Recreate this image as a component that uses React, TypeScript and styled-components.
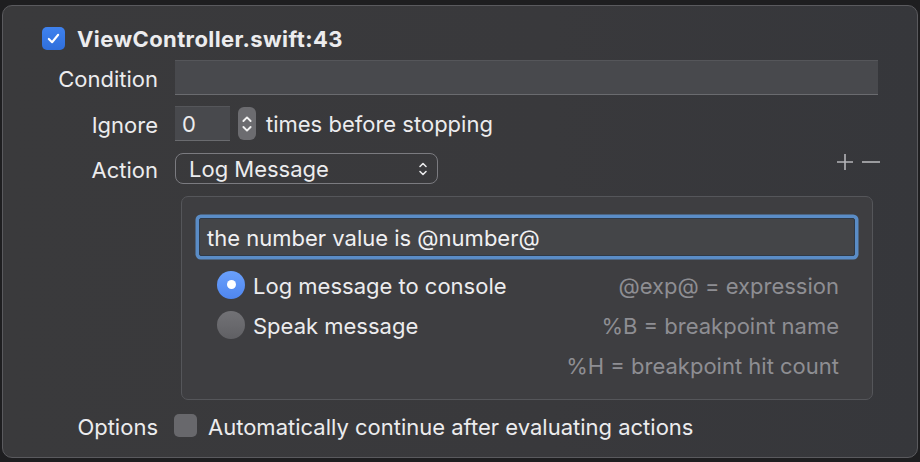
import * as React from "react";
import styled, { createGlobalStyle } from "styled-components";

const GlobalStyle = createGlobalStyle`
  html, body {
    margin: 0;
    padding: 0;
    background: #1d1d1f;
  }
  body {
    font-family: Inter, "Noto Sans", "Liberation Sans", sans-serif;
    -webkit-font-smoothing: antialiased;
  }
`;

const Page = styled.div`
  width: 920px;
  height: 462px;
  box-sizing: border-box;
  padding: 5px 2px 4px 2px;
  background: #1e1e20;
  overflow: hidden;
`;

const Popover = styled.div`
  height: 100%;
  box-sizing: border-box;
  border: 1px solid #5a5a5e;
  border-radius: 10px;
  background: linear-gradient(90deg, #3a3a3c 0%, #39393c 60%, #36373b 100%);
  padding: 21px 39px 0 0;
  display: flex;
  flex-direction: column;
  color: #ececee;
  font-size: 22px;
  line-height: 1.2;
`;

const Header = styled.div`
  display: flex;
  align-items: center;
  gap: 12px;
  padding-left: 39px;
  height: 23px;
`;

const Title = styled.div`
  font-weight: 700;
  font-size: 22px;
  letter-spacing: 0.4px;
  padding-top: 1px;
`;

const Row = styled.div<{ $top: number; $height: number }>`
  display: grid;
  grid-template-columns: 155px 1fr;
  column-gap: 17px;
  align-items: center;
  margin-top: ${(p) => p.$top}px;
  height: ${(p) => p.$height}px;
`;

const Label = styled.div`
  text-align: right;
  padding-top: 3px;
`;

const Field = styled.div`
  height: 100%;
  box-sizing: border-box;
  background: #48494d;
  border-top: 1px solid #55565a;
  border-bottom: 1px solid #6a6b6f;
`;

const Inline = styled.div`
  display: flex;
  align-items: center;
  gap: 8px;
  height: 100%;
`;

const NumberField = styled.div`
  width: 55px;
  height: 100%;
  box-sizing: border-box;
  background: #48494d;
  border-top: 1px solid #55565a;
  border-bottom: 1px solid #6a6b6f;
  padding: 2px 0 0 7px;
  display: flex;
  align-items: center;
`;

const Stepper = styled.div`
  width: 18px;
  height: 33px;
  border-radius: 6px;
  background: #6c6c70;
  display: flex;
  align-items: center;
  justify-content: center;
  margin-right: 2px;
`;

const ActionLine = styled.div`
  display: flex;
  align-items: center;
  justify-content: space-between;
  height: 100%;
`;

const Popup = styled.div`
  width: 263px;
  height: 31px;
  box-sizing: border-box;
  border: 1.5px solid #7b7b80;
  border-radius: 8px;
  display: flex;
  align-items: center;
  justify-content: space-between;
  padding: 1px 9px 0 13px;
`;

const PlusMinus = styled.div`
  display: flex;
  align-items: center;
  gap: 8px;
  margin-right: -2px;
  margin-top: -14px;
`;

const ActionBox = styled.div`
  margin: 12px 5px 0 178px;
  height: 204px;
  box-sizing: border-box;
  border: 1px solid #55565a;
  border-radius: 7px;
  background: #3e3e41;
  padding: 21px 17px 0 17px;
  display: flex;
  flex-direction: column;
`;

const MessageField = styled.div`
  height: 38px;
  box-sizing: border-box;
  background: #444548;
  border: 1px solid #2f3a48;
  box-shadow: 0 0 0 3.5px #5a8cc6;
  border-radius: 2px;
  padding: 2px 0 0 7px;
  display: flex;
  align-items: center;
  color: #f0f0f2;
`;

const Options = styled.div`
  display: grid;
  grid-template-columns: 1fr auto;
  grid-auto-rows: 40px;
  margin-top: 9px;
  padding: 0 16px 0 18px;
  align-items: center;
`;

const RadioItem = styled.div`
  display: flex;
  align-items: center;
  gap: 8px;
`;

const Radio = styled.div<{ $on?: boolean }>`
  width: 28px;
  height: 28px;
  border-radius: 50%;
  box-sizing: border-box;
  background: ${(p) =>
    p.$on
      ? "linear-gradient(180deg, #6aa0fb 0%, #4f86ef 100%)"
      : "linear-gradient(180deg, #727276 0%, #606064 100%)"};
  display: flex;
  align-items: center;
  justify-content: center;
  &::after {
    content: "";
    display: ${(p) => (p.$on ? "block" : "none")};
    width: 9px;
    height: 9px;
    border-radius: 50%;
    background: #ffffff;
  }
`;

const Text = styled.span`
  padding-top: 2px;
`;

const Hint = styled.div`
  color: #8e8e93;
  text-align: right;
  padding-top: 2px;
`;

const Check = styled.div<{ $on?: boolean }>`
  width: 23px;
  height: 23px;
  border-radius: 5px;
  background: ${(p) =>
    p.$on ? "linear-gradient(180deg, #3f82ee 0%, #2f6fdc 100%)" : "#68686c"};
  display: flex;
  align-items: center;
  justify-content: center;
  flex-shrink: 0;
`;

const CheckRow = styled.div`
  display: flex;
  align-items: center;
  gap: 11px;
  margin-left: -1px;
`;

const Chevrons = ({ w, h, color }: { w: number; h: number; color: string }) => (
  <svg width={w} height={h} viewBox="0 0 10 18" fill="none">
    <path d="M2 6.5 L5 3.5 L8 6.5" stroke={color} strokeWidth="1.6" strokeLinecap="round" strokeLinejoin="round" />
    <path d="M2 11.5 L5 14.5 L8 11.5" stroke={color} strokeWidth="1.6" strokeLinecap="round" strokeLinejoin="round" />
  </svg>
);

export default function App() {
  return (
    <>
      <GlobalStyle />
      <Page>
        <Popover>
          <Header>
            <Check $on>
              <svg width="15" height="15" viewBox="0 0 16 16" fill="none">
                <path d="M3 8.5 L6.5 12 L13 4" stroke="#fff" strokeWidth="2.2" strokeLinecap="round" strokeLinejoin="round" />
              </svg>
            </Check>
            <Title>ViewController.swift:43</Title>
          </Header>

          <Row $top={10} $height={35}>
            <Label>Condition</Label>
            <Field />
          </Row>

          <Row $top={11} $height={35}>
            <Label>Ignore</Label>
            <Inline>
              <NumberField>0</NumberField>
              <Stepper>
                <Chevrons w={12} h={26} color="#f2f2f2" />
              </Stepper>
              <Text>times before stopping</Text>
            </Inline>
          </Row>

          <Row $top={12} $height={31}>
            <Label>Action</Label>
            <ActionLine>
              <Popup>
                <span>Log Message</span>
                <Chevrons w={10} h={20} color="#e8e8ea" />
              </Popup>
              <PlusMinus>
                <svg width="18" height="18" viewBox="0 0 18 18">
                  <path d="M9 1 V17 M1 9 H17" stroke="#b4b4b8" strokeWidth="1.6" />
                </svg>
                <svg width="18" height="18" viewBox="0 0 18 18">
                  <path d="M0 9 H18" stroke="#b4b4b8" strokeWidth="1.6" />
                </svg>
              </PlusMinus>
            </ActionLine>
          </Row>

          <ActionBox>
            <MessageField>the number value is @number@</MessageField>
            <Options>
              <RadioItem>
                <Radio $on />
                <Text>Log message to console</Text>
              </RadioItem>
              <Hint>@exp@ = expression</Hint>
              <RadioItem>
                <Radio />
                <Text>Speak message</Text>
              </RadioItem>
              <Hint>%B = breakpoint name</Hint>
              <span />
              <Hint>%H = breakpoint hit count</Hint>
            </Options>
          </ActionBox>

          <Row $top={11} $height={24}>
            <Label>Options</Label>
            <CheckRow>
              <Check />
              <Text>Automatically continue after evaluating actions</Text>
            </CheckRow>
          </Row>
        </Popover>
      </Page>
    </>
  );
}
